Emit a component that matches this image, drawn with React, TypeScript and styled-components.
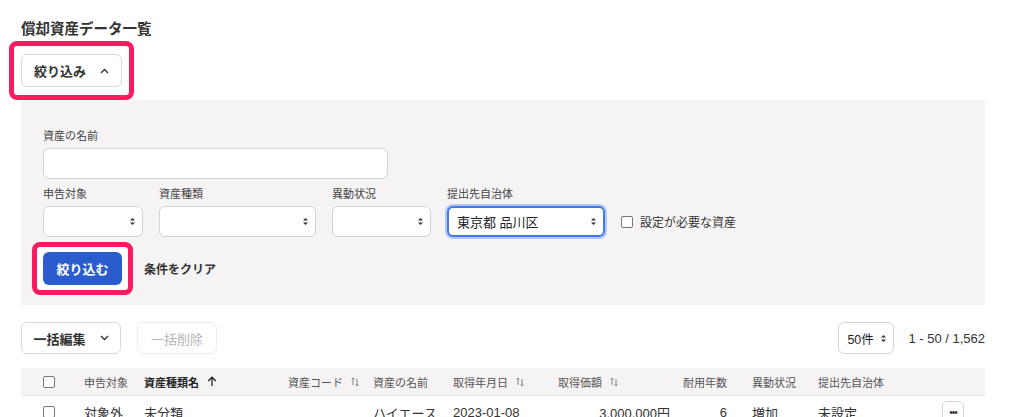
import React from "react";
import styled, { createGlobalStyle } from "styled-components";

const GlobalStyle = createGlobalStyle`
  body {
    margin: 0;
    background: #fff;
    font-family: "Liberation Sans", "Noto Sans CJK JP", sans-serif;
    color: #333;
  }
`;

const Page = styled.div`
  width: 964px;
  padding: 18px 35px 0 21px;
`;

const Title = styled.h1`
  margin: 0;
  font-size: 14.5px;
  line-height: 22px;
  font-weight: 700;
  color: #333;
`;

const Highlight = styled.div<{ $top: number; $side: number }>`
  position: relative;
  display: inline-flex;
  &::before {
    content: "";
    position: absolute;
    top: ${(p) => -p.$top}px;
    bottom: ${(p) => -p.$top}px;
    left: ${(p) => -p.$side}px;
    right: ${(p) => -p.$side}px;
    background: #fff;
    border: 5px solid #fd1a5e;
    border-radius: 8px;
  }
  & > * {
    position: relative;
  }
`;

const ToggleRow = styled.div`
  margin-top: 14px;
  margin-bottom: 13px;
`;

const Button = styled.button<{ $width: number; $disabled?: boolean }>`
  display: inline-flex;
  align-items: center;
  justify-content: center;
  gap: 14px;
  width: ${(p) => p.$width}px;
  height: 32px;
  padding: 0;
  border: 1px solid ${(p) => (p.$disabled ? "#ececec" : "#d9d9d9")};
  border-radius: 6px;
  background: #fff;
  font-family: inherit;
  font-size: 13px;
  font-weight: ${(p) => (p.$disabled ? 400 : 700)};
  color: ${(p) => (p.$disabled ? "#b5b5b5" : "#333")};
`;

const PrimaryButton = styled.button`
  width: 79px;
  height: 33px;
  border: none;
  border-radius: 6px;
  background: #2a5cce;
  color: #fff;
  font-family: inherit;
  font-size: 13px;
  font-weight: 700;
`;

const Panel = styled.section`
  background: #f5f3f4;
  padding: 28px 22px 20px;
`;

const Field = styled.label<{ $width: number }>`
  display: flex;
  flex-direction: column;
  gap: 4px;
  width: ${(p) => p.$width}px;
`;

const Label = styled.span`
  font-size: 11px;
  line-height: 16px;
  color: #444;
`;

const TextInput = styled.div`
  height: 31px;
  box-sizing: border-box;
  border: 1px solid #d4d4d4;
  border-radius: 6px;
  background: #fff;
`;

const SelectBox = styled.div<{ $focused?: boolean }>`
  height: 31px;
  box-sizing: border-box;
  display: flex;
  align-items: center;
  justify-content: space-between;
  padding: 0 6px 0 8px;
  border: ${(p) => (p.$focused ? "2px solid #3d7bea" : "1px solid #d4d4d4")};
  box-shadow: ${(p) => (p.$focused ? "0 0 0 2px rgba(61, 123, 234, 0.35)" : "none")};
  border-radius: 6px;
  background: #fff;
  font-size: 13px;
  color: #222;
`;

const FieldRow = styled.div`
  display: flex;
  align-items: flex-end;
  gap: 16px;
  margin-top: 7px;
`;

const CheckLabel = styled.div`
  display: flex;
  align-items: center;
  gap: 7px;
  height: 31px;
  font-size: 12px;
  color: #333;
`;

const Checkbox = styled.span`
  display: inline-block;
  width: 10px;
  height: 10px;
  border: 1px solid #777;
  border-radius: 2px;
  background: #fff;
`;

const ActionRow = styled.div`
  display: flex;
  align-items: center;
  gap: 22px;
  margin-top: 15px;
`;

const TextLink = styled.span`
  font-size: 12px;
  font-weight: 700;
  color: #333;
`;

const Toolbar = styled.div`
  display: flex;
  align-items: center;
  justify-content: space-between;
  margin-top: 17px;
`;

const ToolGroup = styled.div<{ $gap: number }>`
  display: flex;
  align-items: center;
  gap: ${(p) => p.$gap}px;
`;

const PerPage = styled(SelectBox)`
  width: 56px;
  height: 32px;
  padding: 0 6px 0 8px;
  font-size: 12.5px;
`;

const Count = styled.span`
  font-size: 13px;
  color: #333;
`;

const COLS = "53px 60px 144px 85px 80px 105px 132px 62px 66px 122px 55px";

const HeaderRow = styled.div`
  display: grid;
  grid-template-columns: ${COLS};
  height: 27px;
  margin-top: 14px;
  background: #f5f3f4;
  border-bottom: 1px solid #e4e4e4;
  font-size: 11px;
  color: #555;
`;

const DataRow = styled.div`
  display: grid;
  grid-template-columns: ${COLS};
  height: 32px;
  font-size: 13px;
  color: #333;
`;

const Cell = styled.div<{ $right?: boolean; $bold?: boolean; $pl?: number; $pr?: number }>`
  display: flex;
  align-items: center;
  justify-content: ${(p) => (p.$right ? "flex-end" : "flex-start")};
  gap: 8px;
  padding-left: ${(p) => p.$pl ?? 10}px;
  padding-right: ${(p) => p.$pr ?? 0}px;
  font-weight: ${(p) => (p.$bold ? 700 : 400)};
  color: ${(p) => (p.$bold ? "#222" : "inherit")};
  white-space: nowrap;
`;

const MoreButton = styled.span`
  display: inline-flex;
  align-items: center;
  justify-content: center;
  width: 20px;
  height: 20px;
  border: 1px solid #d4d4d4;
  border-radius: 5px;
  font-size: 10px;
  letter-spacing: -1px;
  color: #333;
`;

const Updown = () => (
  <svg width="7" height="9" viewBox="0 0 7 9">
    <path d="M3.5 1 L6 3.6 H1 Z" fill="#333" />
    <path d="M3.5 8 L6 5.4 H1 Z" fill="#333" />
  </svg>
);

const Chevron = ({ up }: { up?: boolean }) => (
  <svg width="9" height="6" viewBox="0 0 9 6">
    <path
      d={up ? "M1 5 L4.5 1.5 L8 5" : "M1 1 L4.5 4.5 L8 1"}
      fill="none"
      stroke="#333"
      strokeWidth="1.4"
    />
  </svg>
);

const SortIcon = () => (
  <svg width="8" height="10" viewBox="0 0 8 10">
    <path d="M2 8 V1 M0.6 2.4 L2 1 L3.4 2.4" fill="none" stroke="#777" strokeWidth="0.9" />
    <path d="M6 2 V9 M4.6 7.6 L6 9 L7.4 7.6" fill="none" stroke="#777" strokeWidth="0.9" />
  </svg>
);

const SortUp = () => (
  <svg width="10" height="11" viewBox="0 0 10 11">
    <path d="M5 10 V1.5 M1.2 5 L5 1.2 L8.8 5" fill="none" stroke="#222" strokeWidth="1.3" />
  </svg>
);

const App: React.FC = () => {
  return (
    <Page>
      <GlobalStyle />
      <Title>償却資産データ一覧</Title>

      <ToggleRow>
        <Highlight $top={13} $side={12}>
          <Button $width={101} style={{ height: 33 }}>
            絞り込み
            <Chevron up />
          </Button>
        </Highlight>
      </ToggleRow>

      <Panel>
        <Field $width={345}>
          <Label>資産の名前</Label>
          <TextInput />
        </Field>

        <FieldRow>
          <Field $width={100}>
            <Label>申告対象</Label>
            <SelectBox>
              <span />
              <Updown />
            </SelectBox>
          </Field>
          <Field $width={157}>
            <Label>資産種類</Label>
            <SelectBox>
              <span />
              <Updown />
            </SelectBox>
          </Field>
          <Field $width={99}>
            <Label>異動状況</Label>
            <SelectBox>
              <span />
              <Updown />
            </SelectBox>
          </Field>
          <Field $width={158}>
            <Label>提出先自治体</Label>
            <SelectBox $focused>
              <span>東京都 品川区</span>
              <Updown />
            </SelectBox>
          </Field>
          <CheckLabel>
            <Checkbox />
            設定が必要な資産
          </CheckLabel>
        </FieldRow>

        <ActionRow>
          <Highlight $top={10} $side={11}>
            <PrimaryButton>絞り込む</PrimaryButton>
          </Highlight>
          <TextLink>条件をクリア</TextLink>
        </ActionRow>
      </Panel>

      <Toolbar>
        <ToolGroup $gap={16}>
          <Button $width={100}>
            一括編集
            <Chevron />
          </Button>
          <Button $width={80} $disabled>
            一括削除
          </Button>
        </ToolGroup>
        <ToolGroup $gap={14}>
          <PerPage>
            <span>50件</span>
            <Updown />
          </PerPage>
          <Count>1 - 50 / 1,562</Count>
        </ToolGroup>
      </Toolbar>

      <HeaderRow>
        <Cell $pl={22}>
          <Checkbox />
        </Cell>
        <Cell>申告対象</Cell>
        <Cell $bold>
          資産種類名
          <SortUp />
        </Cell>
        <Cell>
          資産コード
          <SortIcon />
        </Cell>
        <Cell>資産の名前</Cell>
        <Cell>
          取得年月日
          <SortIcon />
        </Cell>
        <Cell>
          取得価額
          <SortIcon />
        </Cell>
        <Cell $right $pl={0} $pr={15}>
          耐用年数
        </Cell>
        <Cell>異動状況</Cell>
        <Cell>提出先自治体</Cell>
        <Cell />
      </HeaderRow>

      <DataRow>
        <Cell $pl={22}>
          <Checkbox />
        </Cell>
        <Cell>対象外</Cell>
        <Cell>未分類</Cell>
        <Cell />
        <Cell>ハイエース</Cell>
        <Cell>2023-01-08</Cell>
        <Cell $right $pr={10}>
          3,000,000円
        </Cell>
        <Cell $right $pl={0} $pr={15}>
          6
        </Cell>
        <Cell>増加</Cell>
        <Cell>未設定</Cell>
        <Cell $pl={12}>
          <MoreButton>•••</MoreButton>
        </Cell>
      </DataRow>
    </Page>
  );
};

export default App;
